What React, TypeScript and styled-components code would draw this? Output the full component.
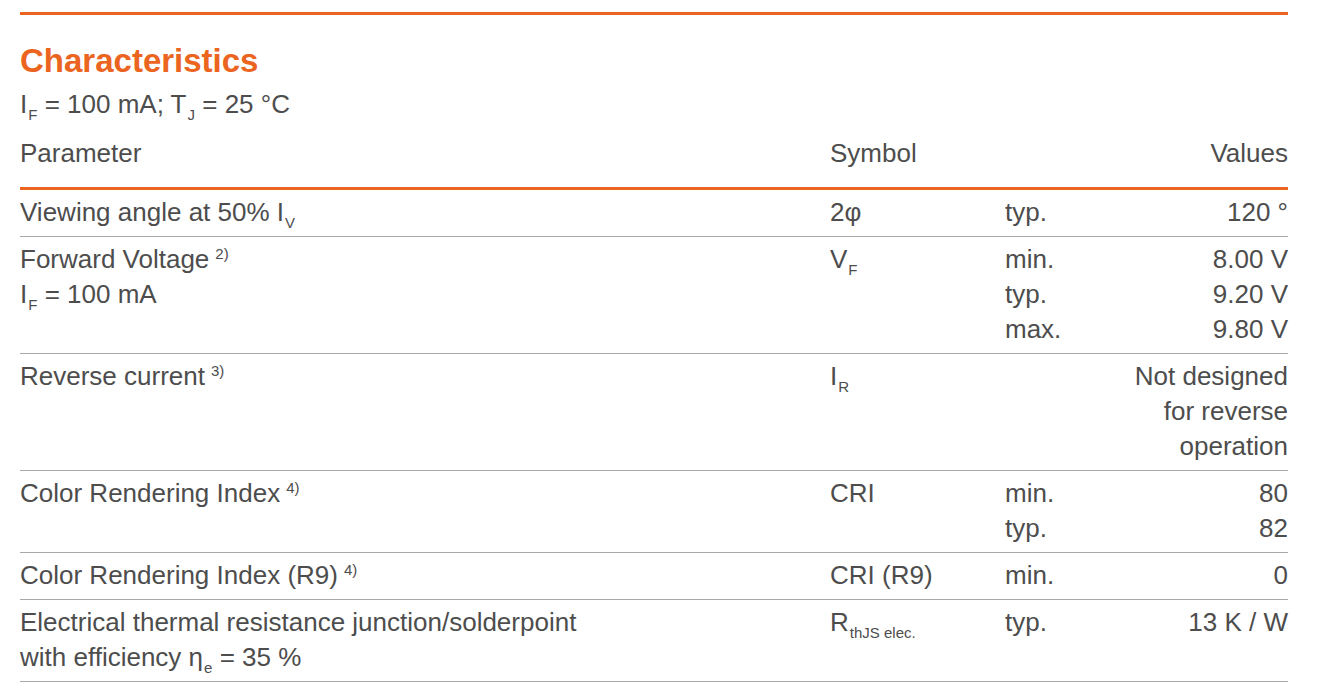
import React from "react";
import styled, { createGlobalStyle } from "styled-components";

const Global = createGlobalStyle`
  html, body { margin: 0; padding: 0; background: #fff; }
  body { font-family: "Liberation Sans", Arial, sans-serif; color: #4d4d4d; }
`;

const ORANGE = "#eb6420";

const Page = styled.div`
  padding: 12px 29px 0 20px;
  width: 1268px;
`;

const TopRule = styled.div`
  height: 3px;
  background: ${ORANGE};
`;

const Title = styled.h2`
  margin: 28px 0 0 0;
  font-size: 33px;
  line-height: 36px;
  font-weight: 700;
  color: ${ORANGE};
`;

const Conditions = styled.div`
  margin-top: 10px;
  font-size: 26px;
  line-height: 30px;
`;

const Grid = styled.div`
  display: grid;
  grid-template-columns: 810px 175px 1fr 160px;
  font-size: 26px;
  line-height: 35px;
`;

const HeadCell = styled.div<{ $right?: boolean }>`
  padding: 17px 0 16px 0;
  border-bottom: 3px solid ${ORANGE};
  text-align: ${(p) => (p.$right ? "right" : "left")};
`;

const Cell = styled.div<{ $right?: boolean }>`
  padding: 5px 0 6px 0;
  border-bottom: 1px solid #a8a8a8;
  text-align: ${(p) => (p.$right ? "right" : "left")};
`;

const Sub = styled.sub`
  font-size: 15px;
  vertical-align: -7px;
  line-height: 0;
  margin-left: 1px;
`;

const Sup = styled.sup`
  font-size: 15px;
  vertical-align: 9px;
  line-height: 0;
  margin-left: 6px;
`;

const Line = styled.div``;

type Row = {
  param: React.ReactNode;
  symbol: React.ReactNode;
  kinds: string[];
  values: React.ReactNode[];
};

const rows: Row[] = [
  {
    param: (
      <>
        Viewing angle at 50% I<Sub>V</Sub>
      </>
    ),
    symbol: "2φ",
    kinds: ["typ."],
    values: ["120 °"],
  },
  {
    param: (
      <>
        <Line>
          Forward Voltage<Sup>2)</Sup>
        </Line>
        <Line>
          I<Sub>F</Sub> = 100 mA
        </Line>
      </>
    ),
    symbol: (
      <>
        V<Sub>F</Sub>
      </>
    ),
    kinds: ["min.", "typ.", "max."],
    values: ["8.00 V", "9.20 V", "9.80 V"],
  },
  {
    param: (
      <>
        Reverse current<Sup>3)</Sup>
      </>
    ),
    symbol: (
      <>
        I<Sub>R</Sub>
      </>
    ),
    kinds: [],
    values: ["Not designed for reverse operation"],
  },
  {
    param: (
      <>
        Color Rendering Index<Sup>4)</Sup>
      </>
    ),
    symbol: "CRI",
    kinds: ["min.", "typ."],
    values: ["80", "82"],
  },
  {
    param: (
      <>
        Color Rendering Index (R9)<Sup>4)</Sup>
      </>
    ),
    symbol: "CRI (R9)",
    kinds: ["min."],
    values: ["0"],
  },
  {
    param: (
      <>
        <Line>Electrical thermal resistance junction/solderpoint</Line>
        <Line>
          with efficiency η<Sub>e</Sub> = 35 %
        </Line>
      </>
    ),
    symbol: (
      <>
        R<Sub>thJS elec.</Sub>
      </>
    ),
    kinds: ["typ."],
    values: ["13 K / W"],
  },
];

export default function App() {
  return (
    <>
      <Global />
      <Page>
        <TopRule />
        <Title>Characteristics</Title>
        <Conditions>
          I<Sub>F</Sub> = 100 mA; T<Sub>J</Sub> = 25 °C
        </Conditions>
        <Grid>
          <HeadCell>Parameter</HeadCell>
          <HeadCell>Symbol</HeadCell>
          <HeadCell />
          <HeadCell $right>Values</HeadCell>
          {rows.map((r, i) => (
            <React.Fragment key={i}>
              <Cell>{r.param}</Cell>
              <Cell>{r.symbol}</Cell>
              <Cell>
                {r.kinds.map((k) => (
                  <Line key={k}>{k}</Line>
                ))}
              </Cell>
              <Cell $right>
                {r.values.map((v, j) => (
                  <Line key={j}>{v}</Line>
                ))}
              </Cell>
            </React.Fragment>
          ))}
        </Grid>
      </Page>
    </>
  );
}
